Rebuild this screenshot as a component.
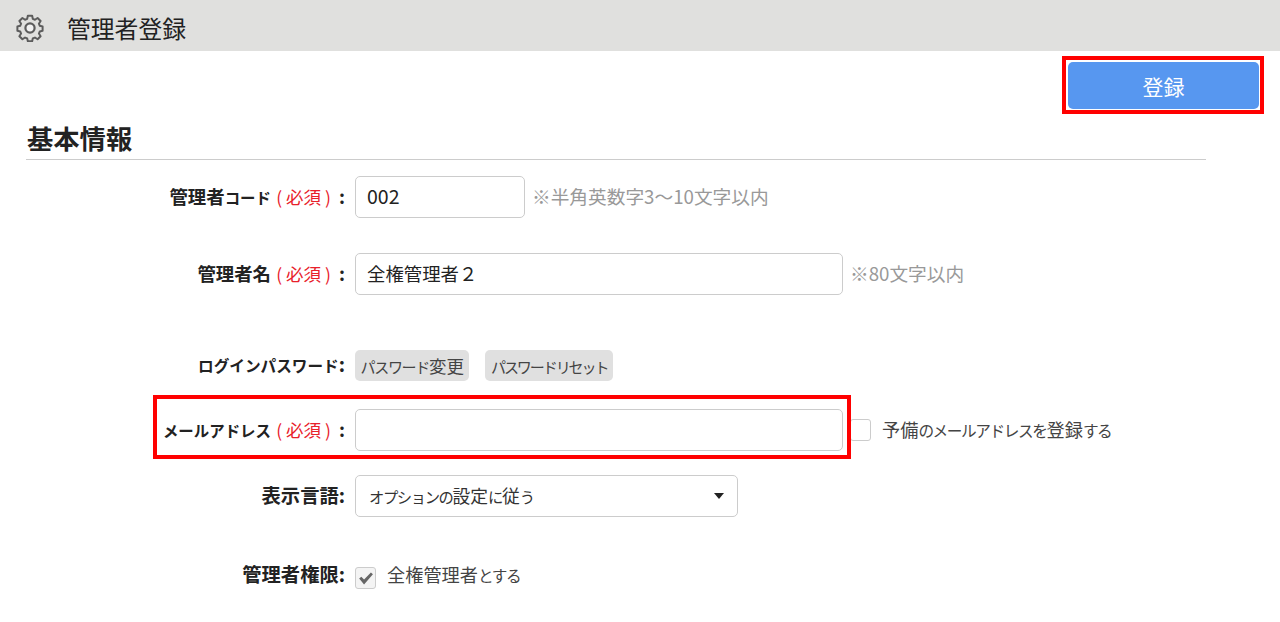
<script>
	const hintColor = '#999';
</script>

<div class="page">
	<header class="titleBar">
		<svg class="gear" viewBox="0 0 28 28" width="28" height="28" fill="none" stroke="#5c5c5c" stroke-width="2.2" stroke-linejoin="round">
			<path d="M11.6 2h4.8l.7 3.4 2.4 1 2.9-1.9 3.4 3.4-1.9 2.9 1 2.4 3.1.7v4.8l-3.1.7-1 2.4 1.9 2.9-3.4 3.4-2.9-1.9-2.4 1-.7 3.2h-4.8l-.7-3.2-2.4-1-2.9 1.9-3.4-3.4 1.9-2.9-1-2.4-3.1-.7v-4.8l3.1-.7 1-2.4-1.9-2.9 3.4-3.4 2.9 1.9 2.4-1z" transform="translate(14 14) scale(.9) translate(-14 -15.6)" />
			<circle cx="14" cy="14" r="4.6" fill="#f2f2f2" />
		</svg>
		<h1>管理者登録</h1>
	</header>

	<div class="actions">
		<div class="redFrame">
			<button class="submit">登録</button>
		</div>
	</div>

	<section class="basic">
		<h2>基本情報</h2>

		<div class="row first">
			<div class="label">管理者<span class="kana">コード</span> <span class="req">(<b>必須</b>)</span><span class="colon">:</span></div>
			<div class="input short"><span class="num">002</span></div>
			<span class="hint">※半角英数字3～10文字以内</span>
		</div>

		<div class="row second">
			<div class="label">管理者名 <span class="req">(<b>必須</b>)</span><span class="colon">:</span></div>
			<div class="input wide">全権管理者２</div>
			<span class="hint">※80文字以内</span>
		</div>

		<div class="row third">
			<div class="label big"><span class="kana pw">ログインパスワード</span>:</div>
			<button class="grayBtn"><span class="kana">パスワード</span>変更</button>
			<button class="grayBtn"><span class="kana tight">パスワードリセット</span></button>
		</div>

		<div class="row fourth">
			<div class="mark"></div>
			<div class="label"><span class="kana">メールアドレス</span> <span class="req">(<b>必須</b>)</span><span class="colon">:</span></div>
			<div class="input wide"></div>
			<span class="check empty"></span>
			<span class="checkText">予備<span class="kana">のメールアドレスを</span>登録<span class="kana">する</span></span>
		</div>

		<div class="row fifth">
			<div class="label big">表示言語:</div>
			<div class="select">
				<span class="selectText"><span class="kana">オプションの</span>設定<span class="kana">に</span>従<span class="kana">う</span></span>
				<i class="caret"></i>
			</div>
		</div>

		<div class="row sixth">
			<div class="label big">管理者権限:</div>
			<span class="check ticked">
				<svg viewBox="0 0 21 22" width="21" height="22"><path d="M3.5 11.6l2.4-2 3 3 7.6-7.6 2.2 1.8-9.8 11.4z" fill="#666" /></svg>
			</span>
			<span class="checkText">全権管理者<span class="kana">とする</span></span>
		</div>
	</section>
</div>

<style>
	:global(body) {
		background: #fff;
		font-family: "Noto Sans CJK JP", "Noto Sans", sans-serif;
		color: #222;
	}
	.page {
		height: 622px;
		overflow: hidden;
	}
	.titleBar {
		display: flex;
		align-items: center;
		height: 51px;
		padding-left: 16px;
		background: #e0e0de;
	}
	.gear {
		margin-top: 4px;
	}
	h1 {
		margin: 3px 0 0 23px;
		font-size: 23.8px;
		font-weight: 400;
		color: #222;
	}
	.actions {
		display: flex;
		justify-content: flex-end;
		padding: 5px 16px 0 0;
		height: 58px;
	}
	.redFrame {
		border: 4px solid #f00;
		padding: 2px 1px 1px 2px;
		width: 191px;
		height: 47px;
	}
	.submit {
		display: block;
		width: 191px;
		height: 47px;
		border: 0;
		border-radius: 5px;
		background: #5797f0;
		color: #fff;
		font: inherit;
		font-size: 21px;
	}
	.basic {
		margin: 0 74px 0 26px;
	}
	h2 {
		margin: 0;
		padding-left: 1px;
		height: 45px;
		line-height: 48px;
		font-size: 26.3px;
		font-weight: 700;
		border-bottom: 1px solid #ccc;
		color: #222;
	}
	.row {
		position: relative;
		display: flex;
		align-items: center;
	}
	.first { margin-top: 16px; }
	.second { margin-top: 35px; }
	.third { margin-top: 55px; }
	.fourth { margin-top: 28px; }
	.fifth { margin-top: 24px; }
	.sixth { margin-top: 44px; }
	.label {
		width: 319px;
		margin-right: 10px;
		padding-bottom: 2px;
		text-align: right;
		font-size: 18.4px;
		line-height: 24px;
		font-weight: 700;
		white-space: nowrap;
		color: #222;
	}
	.label.big {
		font-size: 19.3px;
	}
	.colon {
		margin-left: 8px;
	}
	.kana {
		font-size: 0.86em;
		letter-spacing: -0.09em;
	}
	.tight {
		letter-spacing: -0.14em;
	}
	.label .kana {
		font-size: 0.84em;
		letter-spacing: 0;
	}
	.label .pw {
		font-size: 0.81em;
	}
	.req {
		color: #e8212b;
		font-weight: 400;
		font-size: 17.5px;
		margin-left: 1px;
	}
	.req b {
		font-weight: 400;
		margin: 0 4px;
	}
	.input {
		box-sizing: border-box;
		height: 42px;
		line-height: 38px;
		padding: 0 11px;
		border: 1px solid #ccc;
		border-radius: 5px;
		font-size: 18.4px;
		background: #fff;
	}
	.num {
		font-size: 19.5px;
	}
	.short { width: 170px; }
	.wide { width: 488px; }
	.hint {
		margin-left: 7px;
		padding-bottom: 3px;
		font-size: 18.7px;
		color: #999;
	}
	.grayBtn {
		height: 31px;
		margin-right: 16px;
		padding: 0 5.5px;
		border: 0;
		border-radius: 5px;
		background: #e0e0e0;
		color: #444;
		font: inherit;
		font-size: 17.5px;
		white-space: nowrap;
	}
	.mark {
		position: absolute;
		left: 127px;
		top: -14px;
		width: 698px;
		height: 64px;
		box-sizing: border-box;
		border: 4px solid #f00;
		pointer-events: none;
	}
	.check {
		box-sizing: border-box;
		display: inline-flex;
		width: 21px;
		height: 22px;
		border: 1px solid #ccc;
		border-radius: 3px;
		background: #f4f4f4;
		align-items: center;
		justify-content: center;
	}
	.check.ticked {
		margin-top: 5px;
	}
	.check.empty {
		margin-left: 7px;
		background: #fff;
	}
	.checkText {
		margin-left: 11px;
		padding-bottom: 2px;
		font-size: 18.2px;
		color: #444;
	}
	.select {
		box-sizing: border-box;
		display: flex;
		align-items: center;
		justify-content: space-between;
		width: 383px;
		height: 42px;
		padding: 0 13px 0 13px;
		border: 1px solid #ccc;
		border-radius: 5px;
		font-size: 17.8px;
		color: #333;
	}
	.selectText {
		padding-bottom: 2px;
	}
	.caret {
		width: 0;
		height: 0;
		border-left: 5px solid transparent;
		border-right: 5px solid transparent;
		border-top: 6px solid #222;
	}
</style>
